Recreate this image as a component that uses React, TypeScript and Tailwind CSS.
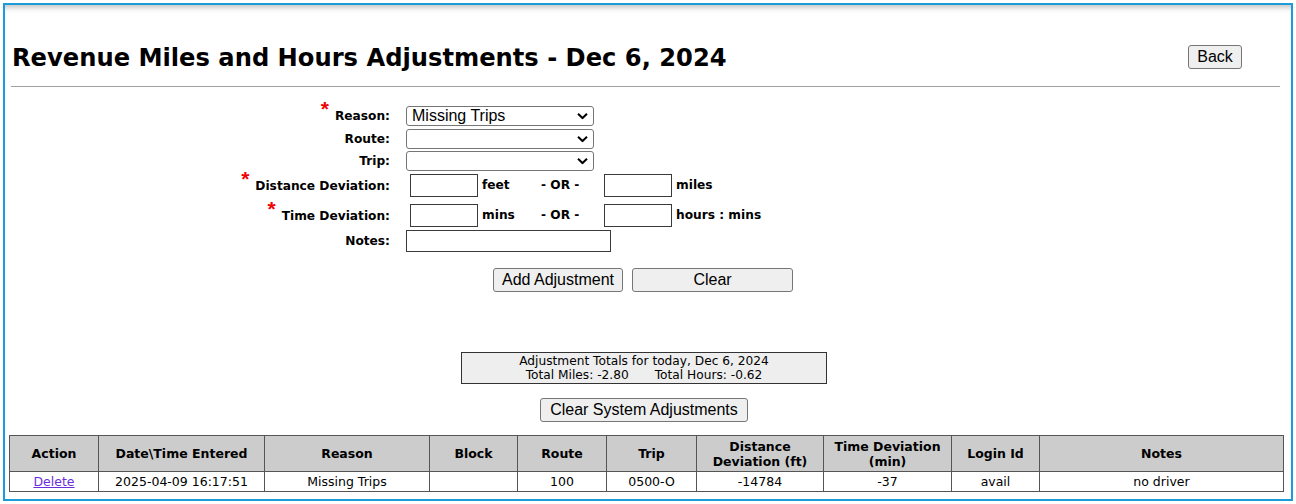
import React from "react";

const verdana = { fontFamily: '"DejaVu Sans", Verdana, sans-serif' };

function Chevron() {
  return (
    <svg width="11" height="7" viewBox="0 0 11 7" className="pointer-events-none absolute right-[6px] top-1/2 -translate-y-1/2">
      <path d="M1 1.2 L5.5 5.5 L10 1.2" fill="none" stroke="#000" strokeWidth="2" />
    </svg>
  );
}

function FakeSelect({ value }: { value?: string }) {
  return (
    <div className="relative w-[188px] h-[20px]">
      <select
        defaultValue={value ?? ""}
        className="block w-full h-full appearance-none rounded-[3px] border border-[#767676] bg-white pl-[5px] text-[16px] leading-[18px] text-black font-['Liberation_Sans',Arial,sans-serif]"
      >
        <option value={value ?? ""}>{value ?? ""}</option>
      </select>
      <Chevron />
    </div>
  );
}

function Label({ text, req }: { text: string; req?: boolean }) {
  return (
    <div className="w-[385px] text-right text-[12.2px] font-bold leading-[14px] text-black font-['DejaVu_Sans',Verdana,sans-serif]">
      {req && (
        <span className="relative top-[-4px] mr-[6px] text-[21px] leading-[0] text-[#f00000] font-['Liberation_Sans',Arial,sans-serif]">
          *
        </span>
      )}
      {text}
    </div>
  );
}

function Box({ w }: { w: string }) {
  return <input className={`${w} h-[23px] border border-[#3a3a3a] bg-white`} />;
}

const btn =
  "h-[24px] whitespace-nowrap rounded-[3px] border border-[#767676] bg-[#efefef] px-[6px] text-[16px] leading-[20px] text-black font-['Liberation_Sans',Arial,sans-serif]";

const rows = [
  ["Delete", "2025-04-09 16:17:51", "Missing Trips", "", "100", "0500-O", "-14784", "-37", "avail", "no driver"],
];

export default function App() {
  return (
    <div className="h-[504px] w-[1296px] bg-white p-[3px]">
      <div className="h-[498px] border-2 border-[#1b9bd8] bg-white shadow-[inset_0_7px_6px_-5px_rgba(0,0,0,0.28)]">
        {/* header */}
        <div className="flex items-start justify-between pl-[7px] pr-[49px] pt-[39px]">
          <h1 className="text-[24.2px] font-bold leading-[28px] text-black font-['DejaVu_Sans',Verdana,sans-serif]">
            Revenue Miles and Hours Adjustments - Dec 6, 2024
          </h1>
          <button className={`${btn} mt-[1px] w-[54px]`}>Back</button>
        </div>
        <div className="ml-[6px] mr-[11px] mt-[14px] h-px bg-[#a0a0a0]" />

        {/* form */}
        <div className="mt-[19px] flex flex-col">
          <div className="flex h-[20px] items-center">
            <Label text="Reason:" req />
            <div className="ml-[16px]">
              <FakeSelect value="Missing Trips" />
            </div>
          </div>
          <div className="mt-[3px] flex h-[20px] items-center">
            <Label text="Route:" />
            <div className="ml-[16px]">
              <FakeSelect />
            </div>
          </div>
          <div className="mt-[2px] flex h-[20px] items-center">
            <Label text="Trip:" />
            <div className="ml-[16px]">
              <FakeSelect />
            </div>
          </div>
          <div className="mt-[3px] flex h-[23px] items-center">
            <Label text="Distance Deviation:" req />
            <div className="ml-[20px] flex items-center text-[12.2px] font-bold text-black font-['DejaVu_Sans',Verdana,sans-serif]">
              <Box w="w-[68px]" />
              <span className="w-[63px] pl-[4px]">feet</span>
              <span className="w-[63px]">- OR -</span>
              <Box w="w-[68px]" />
              <span className="pl-[4px]">miles</span>
            </div>
          </div>
          <div className="mt-[7px] flex h-[23px] items-center">
            <Label text="Time Deviation:" req />
            <div className="ml-[20px] flex items-center text-[12.2px] font-bold text-black font-['DejaVu_Sans',Verdana,sans-serif]">
              <Box w="w-[68px]" />
              <span className="w-[63px] pl-[4px]">mins</span>
              <span className="w-[63px]">- OR -</span>
              <Box w="w-[68px]" />
              <span className="pl-[4px]">hours : mins</span>
            </div>
          </div>
          <div className="mt-[3px] flex h-[22px] items-center">
            <Label text="Notes:" />
            <div className="ml-[16px]">
              <input className="h-[22px] w-[205px] border border-[#3a3a3a] bg-white" />
            </div>
          </div>
          <div className="mt-[16px] flex gap-[9px] pl-[488px]">
            <button className={`${btn} w-[130px]`}>Add Adjustment</button>
            <button className={`${btn} w-[161px]`}>Clear</button>
          </div>
        </div>

        {/* totals */}
        <div className="mt-[60px] flex flex-col items-center pr-[8px]">
          <div
            className="h-[32px] w-[366px] border border-[#333] bg-[#eeeeee] pt-px text-center text-[12.2px] leading-[14px] text-black"
            style={verdana}
          >
            <div>Adjustment Totals for today, Dec 6, 2024</div>
            <div>
              Total Miles: -2.80<span className="ml-[26px]">Total Hours: -0.62</span>
            </div>
          </div>
          <button className={`${btn} mt-[14px] w-[208px]`}>Clear System Adjustments</button>
        </div>

        {/* table */}
        <table
          className="ml-[4px] mt-[13px] w-[1274px] table-fixed border-collapse border border-[#555] text-black"
          style={verdana}
        >
          <colgroup>
            <col className="w-[89px]" />
            <col className="w-[166px]" />
            <col className="w-[165px]" />
            <col className="w-[88px]" />
            <col className="w-[89px]" />
            <col className="w-[90px]" />
            <col className="w-[127px]" />
            <col className="w-[128px]" />
            <col className="w-[88px]" />
            <col className="w-[244px]" />
          </colgroup>
          <thead>
            <tr className="h-[36px] bg-[#cccccc] text-[12.5px] font-bold leading-[15px]">
              <th className="border border-[#555]">Action</th>
              <th className="border border-[#555]">Date\Time Entered</th>
              <th className="border border-[#555]">Reason</th>
              <th className="border border-[#555]">Block</th>
              <th className="border border-[#555]">Route</th>
              <th className="border border-[#555]">Trip</th>
              <th className="border border-[#555]">
                Distance
                <br />
                Deviation (ft)
              </th>
              <th className="border border-[#555]">
                Time Deviation
                <br />
                (min)
              </th>
              <th className="border border-[#555]">Login Id</th>
              <th className="border border-[#555]">Notes</th>
            </tr>
          </thead>
          <tbody>
            {rows.map((r, i) => (
              <tr key={i} className="h-[20px] text-center text-[12.5px] leading-[14px]">
                {r.map((c, j) => (
                  <td key={j} className="border border-[#555] p-0">
                    {j === 0 ? (
                      <a href="#" className="text-[#6a2fdc] underline">
                        {c}
                      </a>
                    ) : (
                      c
                    )}
                  </td>
                ))}
              </tr>
            ))}
          </tbody>
        </table>
      </div>
    </div>
  );
}
